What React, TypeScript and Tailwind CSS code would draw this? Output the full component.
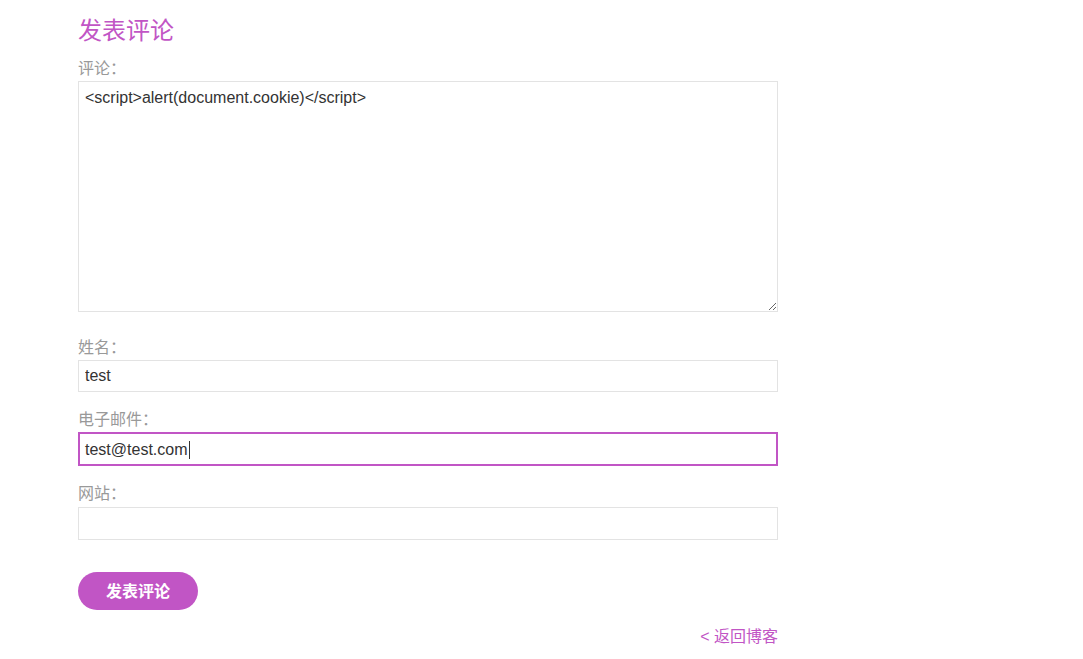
import React from 'react';

const font = { fontFamily: '"Liberation Sans", "Noto Sans CJK SC", sans-serif' };

const Label = ({ text }: { text: string }) => (
  <label className="block h-6 text-base leading-6 text-[#999999]">{text}</label>
);

export default function App() {
  return (
    <div className="min-h-screen bg-white" style={font}>
      <div className="ml-[78px] w-[700px] pt-[15px]">
        <h1 className="h-8 text-[24px] leading-8 text-[#c155c5]">发表评论</h1>

        <div className="mt-[10px]">
          <Label text="评论：" />
          <textarea
            defaultValue="<script>alert(document.cookie)</script>"
            className="block h-[231px] w-full resize-y border border-[#e3e3e3] px-[6px] py-[6px] text-base leading-5 text-[#333333] outline-none"
          />
        </div>

        <div className="mt-6">
          <Label text="姓名：" />
          <input
            defaultValue="test"
            className="block h-8 w-full border border-[#e3e3e3] px-[6px] text-base text-[#333333] outline-none"
          />
        </div>

        <div className="mt-4">
          <Label text="电子邮件：" />
          <div className="flex h-[34px] w-full items-center border-2 border-[#c155c5] px-[5px] pt-[2px] text-base text-[#333333]">
            <span>test@test.com</span>
            <span className="ml-px h-[18px] w-px bg-[#333333]" />
          </div>
        </div>

        <div className="mt-4">
          <Label text="网站：" />
          <input className="mt-px block h-[33px] w-full border border-[#e3e3e3] px-[6px] text-base text-[#333333] outline-none" />
        </div>

        <button className="mt-8 h-[38px] w-[120px] rounded-full bg-[#c155c5] pt-[2px] text-base font-bold text-white">
          发表评论
        </button>

        <div className="mt-[15px] flex justify-end">
          <a href="#" className="text-base leading-6 text-[#c155c5]">
            &lt; 返回博客
          </a>
        </div>
      </div>
    </div>
  );
}
